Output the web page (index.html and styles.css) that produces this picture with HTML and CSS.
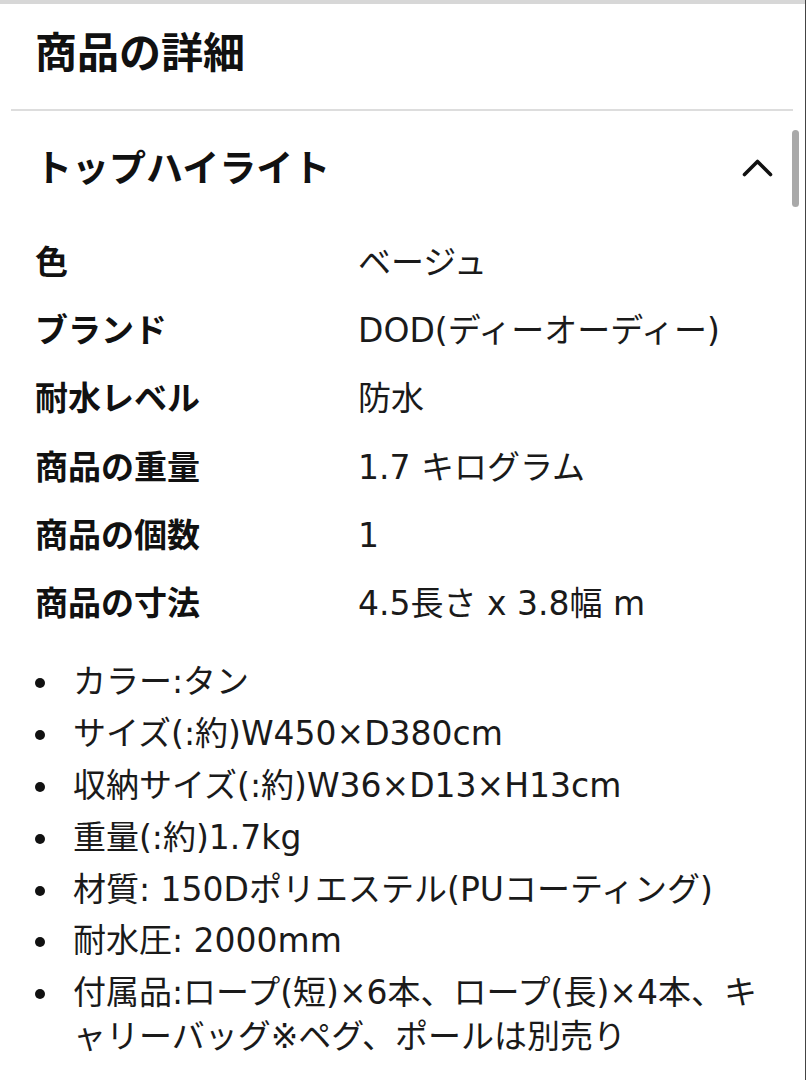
FILE: index.html
```html
<!DOCTYPE html>
<html lang="ja">
<head>
<meta charset="utf-8">
<title>商品の詳細</title>
<link rel="stylesheet" href="styles.css">
</head>
<body>
<div class="page">
  <div class="topbar"></div>
  <header class="header">
    <h1 class="title">商品の詳細</h1>
  </header>
  <div class="divider"></div>
  <section class="highlights">
    <div class="section-head">
      <h2 class="section-title">トップハイライト</h2>
      <svg class="chevron" width="32" height="20" viewBox="0 0 32 20" aria-hidden="true">
        <path d="M2.5 16.5 L15.5 3.5 L28.5 16.5" fill="none" stroke="#111" stroke-width="3.6" stroke-linecap="round" stroke-linejoin="round"/>
      </svg>
    </div>
    <dl class="specs">
      <dt class="label">色</dt><dd class="value">ベージュ</dd>
      <dt class="label">ブランド</dt><dd class="value">DOD(ディーオーディー)</dd>
      <dt class="label">耐水レベル</dt><dd class="value">防水</dd>
      <dt class="label">商品の重量</dt><dd class="value">1.7 キログラム</dd>
      <dt class="label">商品の個数</dt><dd class="value">1</dd>
      <dt class="label">商品の寸法</dt><dd class="value">4.5長さ x 3.8幅 m</dd>
    </dl>
    <ul class="bullets">
      <li class="bullet"><span class="text">カラー:タン</span></li>
      <li class="bullet"><span class="text">サイズ(:約)W450×D380cm</span></li>
      <li class="bullet"><span class="text">収納サイズ(:約)W36×D13×H13cm</span></li>
      <li class="bullet"><span class="text">重量(:約)1.7kg</span></li>
      <li class="bullet"><span class="text">材質: 150Dポリエステル(PUコーティング)</span></li>
      <li class="bullet"><span class="text">耐水圧: 2000mm</span></li>
      <li class="bullet"><span class="text">付属品:ロープ(短)×6本、ロープ(長)×4本、キャリーバッグ※ペグ、ポールは別売り</span></li>
    </ul>
  </section>
  <div class="scroll-thumb"></div>
</div>
</body>
</html>
```

FILE: styles.css
```css
html, body {
  margin: 0;
  padding: 0;
  background: #ffffff;
}

body {
  font-family: "DejaVu Sans", "Noto Sans CJK JP", sans-serif;
  color: #111111;
}

.page {
  position: relative;
  width: 805px;
  min-height: 1080px;
  border-right: 1px solid #444444;
  overflow: hidden;
}

.topbar {
  height: 4px;
  background: #d7d7d7;
}

.header {
  padding: 24.5px 35px 30.5px;
}

.title {
  margin: 0;
  font-size: 42px;
  line-height: 50px;
  font-weight: 700;
}

.divider {
  height: 2px;
  background: #dddddd;
  margin: 0 12px 0 11px;
}

.section-head {
  display: flex;
  align-items: center;
  justify-content: space-between;
  padding: 36.8px 31px 0 35px;
}

.section-title {
  margin: 0;
  font-size: 37px;
  line-height: 44px;
  font-weight: 700;
}

.chevron {
  display: block;
  margin-top: -3px;
}

.specs {
  display: grid;
  grid-template-columns: 323px 1fr;
  margin: 36.6px 0 0;
  padding-left: 35px;
}

.label,
.value {
  margin: 0;
  font-size: 33px;
  line-height: 40px;
  padding: 14.2px 0;
}

.label {
  font-weight: 700;
}

.value {
  font-weight: 400;
  color: #1a1a1a;
}

.bullets {
  list-style: none;
  margin: 21.8px 0 0;
  padding: 0 27px 0 35px;
  display: flex;
  flex-direction: column;
  gap: 7.8px;
}

.bullet {
  display: grid;
  grid-template-columns: 38px 1fr;
  font-size: 33px;
  line-height: 44px;
  color: #1a1a1a;
  line-break: loose;
}

.bullet::before {
  content: "";
  width: 10px;
  height: 10px;
  border-radius: 50%;
  background: #111111;
  margin-top: 18px;
}

.scroll-thumb {
  position: absolute;
  left: 792px;
  top: 130px;
  width: 7px;
  height: 77px;
  border-radius: 4px;
  background: #a9a9a9;
}
```
